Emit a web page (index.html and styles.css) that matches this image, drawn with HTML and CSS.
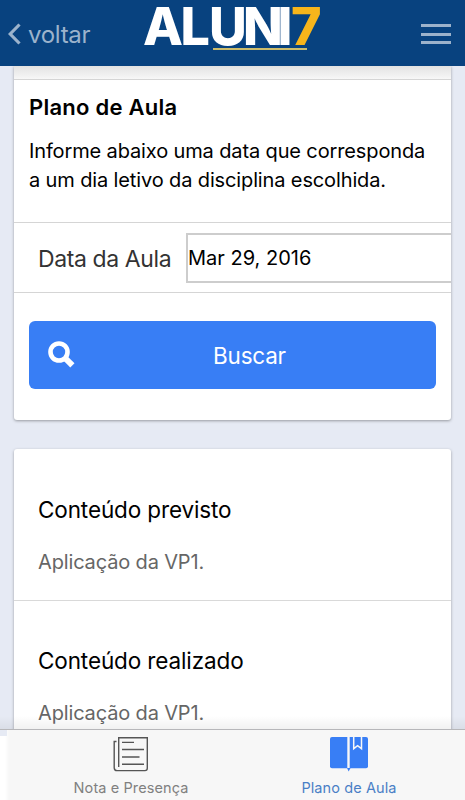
FILE: index.html
```
<!DOCTYPE html>
<html lang="pt-BR">
<head>
    <meta charset="UTF-8">
    <meta name="viewport" content="width=device-width, initial-scale=1.0">
    <title>Plano de Aula</title>
    <link rel="stylesheet" href="styles.css">
</head>
<body>
    <header class="header">
        <a class="back">
            <svg width="13" height="22" viewBox="0 0 13 22"><path d="M11.5 1.5 L2.2 11 L11.5 20.5" fill="none" stroke="currentColor" stroke-width="3.2"/></svg>
            <span>voltar</span>
        </a>
        <svg class="logo" width="184" height="66" viewBox="0 0 184 66">
            <text y="45" x="-1 36.5 65 99 133.5 147">ALUNI<tspan class="logo-seven">7</tspan></text>
            <rect x="69" y="48" width="94" height="2" fill="#cdbd6c"/>
        </svg>
        <div class="hamburger">
            <div></div>
            <div></div>
            <div></div>
        </div>
    </header>

    <main class="content">
        <section class="card search-card">
            <div class="card-top"></div>
            <div class="intro">
                <h2>Plano de Aula</h2>
                <p>Informe abaixo uma data que corresponda<br>a um dia letivo da disciplina escolhida.</p>
            </div>
            <div class="date-row">
                <label class="date-label">Data da Aula</label>
                <div class="date-input"><span>Mar 29, 2016</span></div>
            </div>
            <div class="actions">
                <div class="button">
                    <svg class="search-icon" width="27" height="27" viewBox="0 0 27 27">
                        <circle cx="11" cy="11" r="8.5" fill="none" stroke="#fff" stroke-width="4.6"/>
                        <path d="M16.5 16.5 L24.4 24.4" stroke="#fff" stroke-width="6"/>
                    </svg>
                    <span>Buscar</span>
                </div>
            </div>
        </section>

        <section class="card result-card">
            <div class="item">
                <h3>Conteúdo previsto</h3>
                <p>Aplicação da VP1.</p>
            </div>
            <div class="item">
                <h3>Conteúdo realizado</h3>
                <p>Aplicação da VP1.</p>
            </div>
        </section>
    </main>

    <nav class="tabs">
        <a class="tab">
            <svg width="36" height="36" viewBox="0 0 36 36" fill="none" stroke="#555" stroke-width="1.4">
                <path d="M5.7 31 V1.7 H34.3 V32.3 Q34.3 34.6 32 34.6 H4 Q1.2 34.6 1.2 31.8 V5.5 H3.5"/>
                <path d="M9 6.4 H21 M9 13.5 H31 M9 21 H26.5 M9 28.3 H31"/>
            </svg>
            <span>Nota e Presença</span>
        </a>
        <a class="tab active">
            <svg width="40" height="36" viewBox="0 0 40 36">
                <path d="M3 1 H18.3 V32.3 H3 Q1 32.3 1 30.3 V3 Q1 1 3 1 Z" fill="#387ef5"/>
                <path d="M20.7 1 H37 Q39 1 39 3 V30.3 Q39 32.3 37 32.3 H20.7 Z" fill="#387ef5"/>
                <path d="M18 32 H21.5 L19.7 35.5 Z" fill="#387ef5"/>
                <path d="M24.7 1 V12.7 L28.6 9.7 L32.5 12.7 V1" fill="none" stroke="#f7f7f7" stroke-width="1.5"/>
            </svg>
            <span>Plano de Aula</span>
        </a>
    </nav>
</body>
</html>
```
FILE: styles.css
```
* {
    box-sizing: border-box;
}

body {
    font-family: Inter, "Liberation Sans", sans-serif;
    margin: 0;
    height: 800px;
    display: flex;
    flex-direction: column;
    overflow: hidden;
    background-color: #e6eaf4;
    color: #000;
}

h2, h3, p {
    margin: 0;
    white-space: nowrap;
}

svg {
    display: block;
    flex: none;
}

.header {
    height: 66px;
    flex: none;
    display: flex;
    background-color: #08427f;
}

.back {
    width: 143px;
    padding: 0 0 0 8px;
    height: 68px;
    display: flex;
    align-items: center;
    gap: 7px;
    color: #9cb3cc;
    font-size: 24px;
    letter-spacing: -0.3px;
}

.logo {
    margin-left: 1px;
    overflow: visible;
    font-weight: 800;
    font-size: 52px;
    fill: #fff;
}

.logo-seven {
    fill: #f7b51b;
}

.hamburger {
    margin: 24px 14px 0 auto;
    width: 30px;
    height: 20px;
    display: flex;
    flex-direction: column;
    justify-content: space-between;
}

.hamburger div {
    height: 3px;
    background-color: #9cb2cb;
}

.content {
    flex: 1;
    min-height: 0;
    padding: 0 14px;
    overflow: hidden;
}

.card {
    background-color: #fff;
    border-radius: 3px;
    box-shadow: 0 1px 3px rgba(0, 0, 0, 0.35);
}

.search-card {
    height: 354px;
    border-radius: 0 0 3px 3px;
}

.card-top {
    height: 14px;
    background: linear-gradient(#e2e2e2, #f7f7f7);
    border-bottom: 1px solid #d5d5d5;
}

.intro {
    height: 143px;
    padding: 12px 16px 0 15px;
    border-bottom: 1px solid #d5d5d5;
}

.intro h2 {
    font-size: 22px;
    line-height: 30px;
    font-weight: 600;
    letter-spacing: 0.25px;
}

.intro p {
    margin-top: 15px;
    font-size: 20px;
    line-height: 29px;
    letter-spacing: -0.13px;
}

.date-row {
    height: 70px;
    padding: 10px 0 9px 24px;
    display: flex;
    align-items: center;
    border-bottom: 1px solid #d5d5d5;
}

.date-label {
    width: 148px;
    flex: none;
    padding-top: 2px;
    font-size: 23px;
    letter-spacing: -0.4px;
    color: #333;
    white-space: nowrap;
}

.date-input {
    flex: 1;
    height: 50px;
    display: flex;
    align-items: center;
    border: 2px solid #cdcdcd;
    border-right: 0;
    font-size: 20px;
}

.actions {
    padding: 28px 15px 0;
}

.button {
    height: 68px;
    padding-left: 18px;
    display: flex;
    align-items: center;
    background-color: #387ef5;
    border-radius: 6px;
    color: #fff;
    font-size: 22.5px;
    letter-spacing: -0.2px;
}

.button span {
    padding-top: 1px;
}

.search-icon {
    margin: 0 138px 2px 1px;
}

.result-card {
    margin-top: 29px;
}

.item {
    height: 152px;
    padding: 45px 24px 0;
    border-bottom: 1px solid #d9d9d9;
}

.item + .item {
    padding-top: 44px;
}

.item h3 {
    font-size: 22.5px;
    line-height: 32px;
    font-weight: 400;
    letter-spacing: -0.12px;
}

.item p {
    margin-top: 22px;
    font-size: 20px;
    line-height: 28px;
    letter-spacing: -0.15px;
    color: #666;
}

.tabs {
    position: relative;
    height: 71px;
    flex: none;
    display: flex;
    padding-left: 22px;
    background:
        linear-gradient(#e6eaf4, #e6eaf4) 0 0 / 7px 6px no-repeat,
        linear-gradient(90deg, #fff 5px, #f7f7f7 9px);
    border-top: 1px solid #c2c2c5;
}

/* soft shade cast on the scrolled content */
.tabs::before {
    content: "";
    position: absolute;
    left: 0;
    right: 0;
    bottom: 100%;
    height: 14px;
    background: linear-gradient(rgba(0, 0, 0, 0), rgba(0, 0, 0, 0.06));
}

.tab {
    width: 218px;
    padding-top: 6px;
    display: flex;
    flex-direction: column;
    align-items: center;
    gap: 7px;
    font-size: 14.5px;
    line-height: 18px;
    letter-spacing: 0.1px;
    color: #808080;
    white-space: nowrap;
}

.tab.active {
    color: #4a7fc6;
}
```
